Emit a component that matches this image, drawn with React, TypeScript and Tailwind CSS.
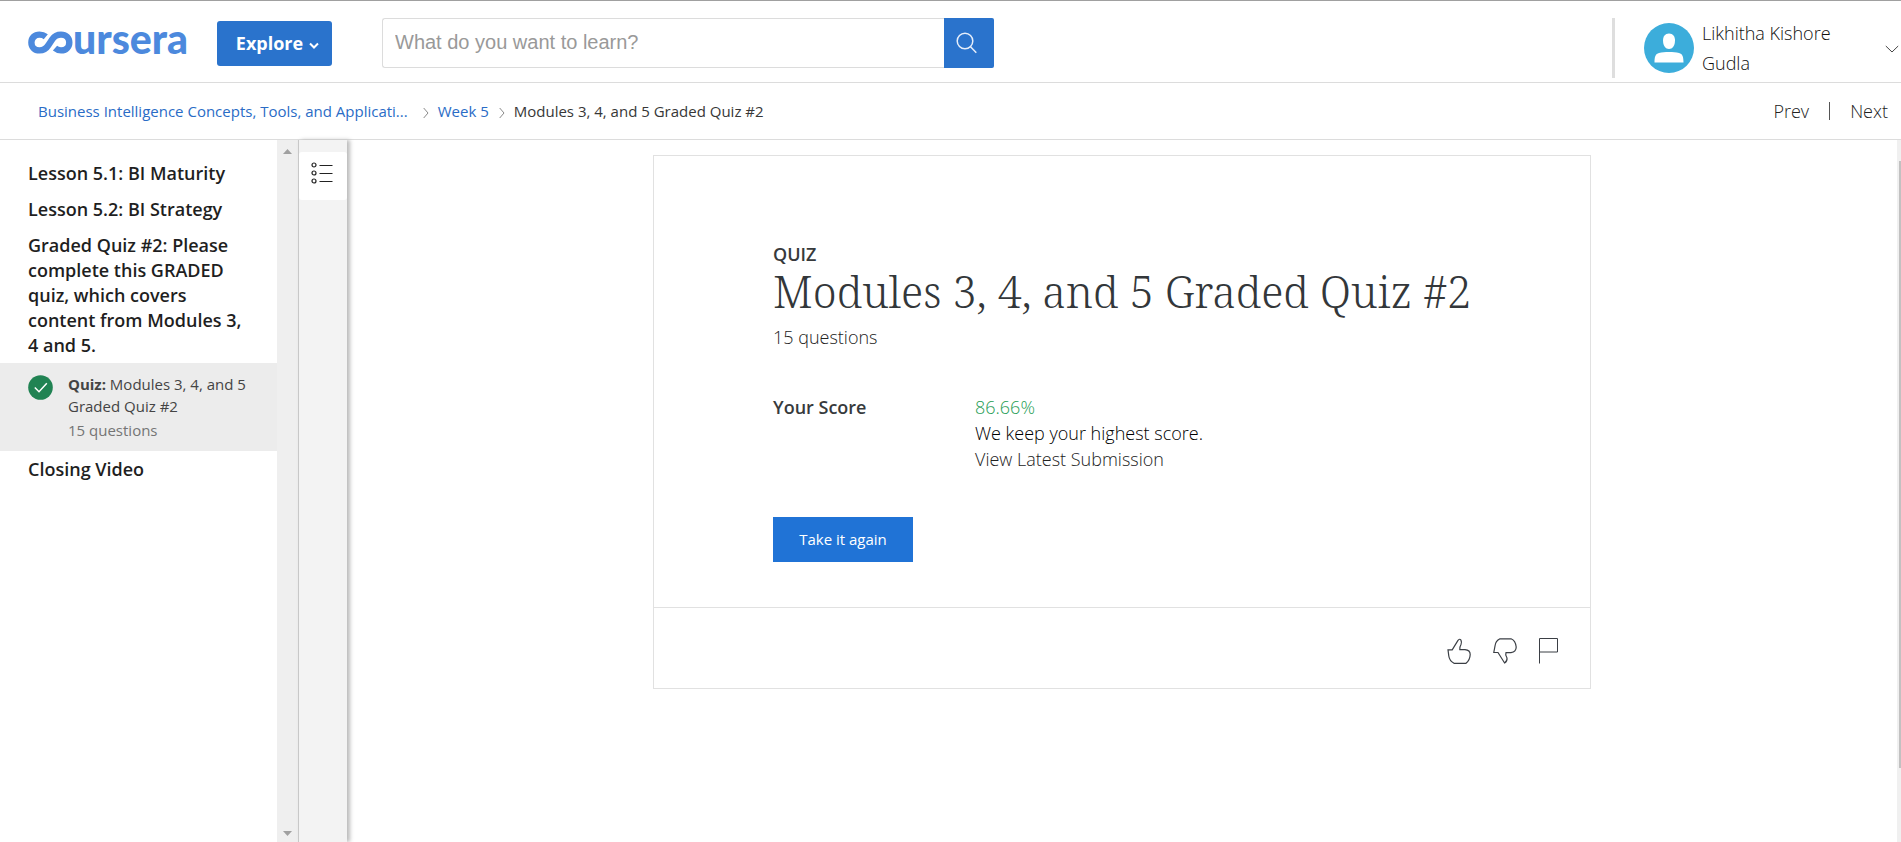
import React from 'react';

const lessonTitle = 'px-7 text-[18px] leading-[25px] font-semibold text-[#1f1f1f]';

function Logo() {
  return (
    <a href="#home" aria-label="Coursera" className="block h-[60px] w-[164px] shrink-0">
      <svg viewBox="0 0 164 60" className="h-[60px] w-[164px]">
        <path
          d="M17.800 23.800C16 22.300 14 21.600 11.500 21.600C6.600 21.600 3.400 25 3.400 29.500C3.400 34 6.600 37.400 11.500 37.400C15.500 37.400 18.300 35.500 20.500 32L24.500 26C26.500 23 29.500 21.600 33 21.600C38 21.600 41.300 25 41.300 29.500C41.300 34 38 37.400 33 37.400C30.700 37.400 28.600 36.600 27 35.200"
          fill="none"
          stroke="#4c89dd"
          strokeWidth="6.400"
        />
        <text x="45" y="41" fill="#4c89dd" className="font-['Lato'] text-[41px] font-black">
          ursera
        </text>
      </svg>
    </a>
  );
}

function Chevron({ className }: { className: string }) {
  return (
    <svg viewBox="0 0 6 12" className={className} fill="none" stroke="#8a8a8a" strokeWidth="1">
      <path d="M0.7 1L5 6L0.7 11" />
    </svg>
  );
}

function Header() {
  return (
    <header className="flex h-[83px] shrink-0 items-start border-t border-b border-t-[#a0a0a0] border-b-[#dcdcdc] pl-7">
      <div className="pt-3">
        <Logo />
      </div>
      <button className="mt-5 ml-[25px] flex h-[45px] w-[115px] shrink-0 items-center justify-center gap-[6px] rounded-[3px] bg-[#2a73cc] pl-[6px] text-[18px] font-bold text-white">
        Explore
        <svg viewBox="0 0 10 8" className="mt-1 h-2 w-[10px]" fill="none" stroke="#fff" strokeWidth="2">
          <path d="M1 1.5L5 5.5L9 1.5" />
        </svg>
      </button>
      <form className="mt-[17px] ml-[50px] flex h-[50px] w-[612px]" onSubmit={(e) => e.preventDefault()}>
        <input
          type="text"
          aria-label="What do you want to learn?"
          placeholder="What do you want to learn?"
          className="min-w-0 flex-1 rounded-l-[3px] border border-r-0 border-[#dcdcdc] px-3 pb-[2px] font-['Liberation_Sans'] text-[20px] placeholder:text-[#999]"
        />
        <button aria-label="Search" className="flex w-[50px] items-center justify-center rounded-r-[2px] bg-[#2a73cc]">
          <svg viewBox="0 0 22 22" className="mr-1 h-[22px] w-[22px]" fill="none" stroke="#e6eefa" strokeWidth="1.5">
            <circle cx="9" cy="9" r="7.800" />
            <path d="M14.300 14.500L20.300 20.700" />
          </svg>
        </button>
      </form>
      <div className="mt-[17px] ml-auto flex h-[60px] items-start border-l-[3px] border-[#dedede] pl-[29px]">
        <svg viewBox="0 0 50 50" className="mt-[5px] h-[50px] w-[50px] shrink-0">
          <circle cx="25" cy="25" r="25" fill="#3caddb" />
          <path d="M25 10.5c4 0 6 3 6 7 0 5-2.600 8.500-6 8.500s-6-3.500-6-8.500c0-4 2-7 6-7z" fill="#fff" />
          <path d="M10.500 39.500c0-6 1-8.500 4.500-9.500 3-.9 6-1 10-1s7 .1 10 1c3.500 1 4.500 3.500 4.500 9.500z" fill="#fff" />
        </svg>
        <p className="ml-2 w-[150px] text-[18px] leading-[30px] font-light text-[#111]">Likhitha Kishore Gudla</p>
        <button aria-label="Account menu" className="mt-[27px] mr-[2px] ml-[33px]">
          <svg viewBox="0 0 14 8" className="h-2 w-[14px]" fill="none" stroke="#444" strokeWidth="1">
            <path d="M0.800 1L7 7L13.200 1" />
          </svg>
        </button>
      </div>
    </header>
  );
}

function Breadcrumbs() {
  return (
    <div className="flex h-[57px] shrink-0 items-center border-b border-[#dcdcdc] pr-[13px] pl-[38px]">
      <nav aria-label="Breadcrumb" className="flex items-center text-[15px] text-[#2a6cc6]">
        <a href="#course">Business Intelligence Concepts, Tools, and Applicati...</a>
        <Chevron className="mt-1 mr-[9px] ml-[15px] h-3 w-[6px]" />
        <a href="#week">Week 5</a>
        <Chevron className="mt-1 mr-[9px] ml-[10px] h-3 w-[6px]" />
        <span className="text-[#373737]">Modules 3, 4, and 5 Graded Quiz #2</span>
      </nav>
      <nav aria-label="Lesson" className="ml-auto flex items-center text-[18px] font-light text-[#222]">
        <a href="#prev">Prev</a>
        <span className="mx-5 h-[18px] w-px bg-[#555]" />
        <a href="#next">Next</a>
      </nav>
    </div>
  );
}

function Sidebar() {
  return (
    <aside className="flex shrink-0">
      <div className="w-[277px] pt-[21px]">
        <h2 className={lessonTitle}>Lesson 5.1: BI Maturity</h2>
        <h2 className={`mt-[11px] ${lessonTitle}`}>Lesson 5.2: BI Strategy</h2>
        <h2 className={`mt-[11px] ${lessonTitle}`}>
          Graded Quiz #2: Please complete this GRADED quiz, which covers content from Modules 3, 4 and 5.
        </h2>
        <a href="#quiz" className="mt-[5px] flex h-[88px] bg-[#ececec] pt-[10px] pr-4 pl-7">
          <svg viewBox="0 0 25 25" className="mt-[2px] h-[25px] w-[25px] shrink-0">
            <circle cx="12.500" cy="12.500" r="12.300" fill="#218353" />
            <path d="M6.800 12.500L11 16.700L18.800 8.300" fill="none" stroke="#fff" strokeWidth="1.500" />
          </svg>
          <span className="ml-[15px] text-[15px] leading-[22px] text-[#444]">
            <strong>Quiz:</strong> Modules 3, 4, and 5 Graded Quiz #2
            <span className="mt-[2px] block text-[#757575]">15 questions</span>
          </span>
        </a>
        <h2 className={`mt-[6px] ${lessonTitle}`}>Closing Video</h2>
      </div>
      <div aria-hidden="true" className="flex w-[21px] flex-col items-center justify-between bg-[#efefef] pt-[9px] pb-[6px]">
        <svg viewBox="0 0 9 5" className="h-[5px] w-[9px]" fill="#a0a0a0">
          <path d="M0 5L4.500 0L9 5z" />
        </svg>
        <svg viewBox="0 0 9 5" className="h-[5px] w-[9px]" fill="#a0a0a0">
          <path d="M0 0L4.500 5L9 0z" />
        </svg>
      </div>
      <div className="w-[49px] border-l border-[#c8c8c8] bg-[#f3f3f3] pt-3 shadow-[3px_0_4px_#bbb]">
        <button aria-label="Show outline" className="flex h-12 w-full items-center justify-center rounded-[3px] bg-white">
          <svg viewBox="0 0 22 22" className="mr-[2px] mb-[6px] h-[22px] w-[22px]" fill="none" stroke="#222" strokeWidth="1.2">
            <circle cx="3" cy="3" r="2" />
            <circle cx="3" cy="11" r="2" />
            <circle cx="3" cy="19" r="2" />
            <path d="M8.500 3.500H21.500M8.500 11.500H21.500M8.500 19.500H21.500" />
          </svg>
        </button>
      </div>
    </aside>
  );
}

function QuizCard() {
  return (
    <article className="w-[938px] border border-[#e1e1e1] text-[18px] text-[#222]">
      <div className="px-[119px] pt-[85px] pb-[45px]">
        <p className="leading-[26px] font-semibold text-[#373a3c]">QUIZ</p>
        <h1 className="font-['Noto_Serif','Liberation_Serif',serif] text-[43px] leading-[50px] font-light whitespace-nowrap text-[#33373a]">
          Modules 3, 4, and 5 Graded Quiz #2
        </h1>
        <p className="mt-[5px] leading-[30px] font-light">15 questions</p>
        <div className="mt-[42px] flex leading-[26px]">
          <h2 className="w-[202px] font-semibold text-[#373a3c]">Your Score</h2>
          <div className="font-light">
            <p className="text-[#1f9d55]">86.66%</p>
            <p className="text-black">We keep your highest score.</p>
            <a href="#submission">View Latest Submission</a>
          </div>
        </div>
        <button className="mt-[45px] block h-[45px] w-[140px] bg-[#2073d6] text-[15px] text-white">Take it again</button>
      </div>
      <div className="flex h-[81px] items-center justify-end gap-[22px] border-t border-[#e1e1e1] pt-[6px] pr-8">
        <button aria-label="Like">
          <svg viewBox="0 0 24 26" className="h-[26px] w-6" fill="none" stroke="#3b3f45" strokeWidth="1.200">
            <path d="M1 11.800H5.200L11 2.400Q12.500 .2 14 2.200Q15 4.500 14 6.500Q12.300 9.500 12.800 11.600H18Q23.200 12 23.200 16.500Q23 22 19 25.300H7Q2.500 23 1.800 18Z" />
          </svg>
        </button>
        <button aria-label="Dislike">
          <svg viewBox="0 0 24 26" className="h-[26px] w-6" fill="none" stroke="#3b3f45" strokeWidth="1.200">
            <path d="M.800 14.500H5L11.600 25Q14.500 23 14 20Q12 17 13 14.600H18Q23.200 14 23.200 9Q22.500 2.500 18 .8H7Q2.500 3 2 8Z" />
          </svg>
        </button>
        <button aria-label="Report">
          <svg viewBox="0 0 19 26" className="h-[26px] w-[19px]" fill="none" stroke="#3b3f45" strokeWidth="1">
            <path d="M.500 25.500V.500H18.500V14H.500" />
          </svg>
        </button>
      </div>
    </article>
  );
}

export default function App() {
  return (
    <div className="flex h-screen flex-col overflow-hidden bg-white font-['Open_Sans',sans-serif]">
      <Header />
      <Breadcrumbs />
      <div className="flex min-h-0 flex-1">
        <Sidebar />
        <main className="flex flex-1 items-start justify-center pt-[15px]">
          <QuizCard />
        </main>
        <div aria-hidden="true" className="w-1 bg-[#f0f0f0] pt-[21px] pl-[2px]">
          <div className="h-[607px] bg-[#c1c1c1]" />
        </div>
      </div>
    </div>
  );
}
